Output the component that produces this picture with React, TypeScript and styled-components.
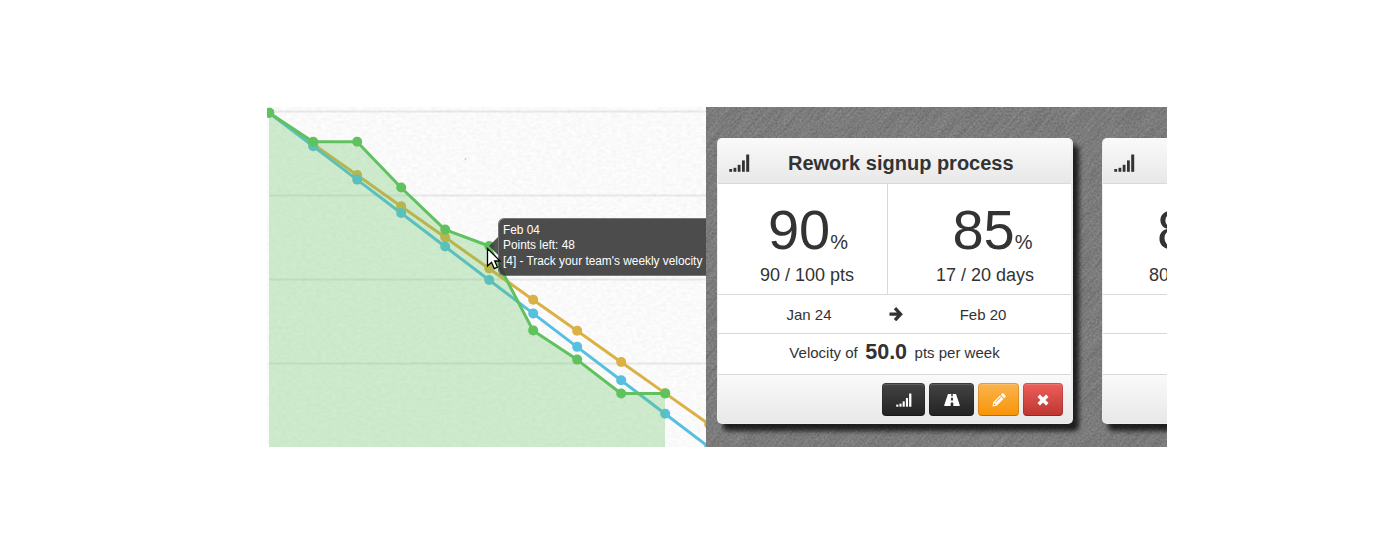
import React from "react";
import styled, { createGlobalStyle } from "styled-components";

const GlobalStyle = createGlobalStyle`
  * { box-sizing: border-box; }
  body {
    margin: 0;
    background: #fff;
    color: #333;
    font-family: "Liberation Sans", Arial, sans-serif;
  }
`;

const Page = styled.main`
  height: 560px;
  padding: 107px 0 0 267px;
`;

const Frame = styled.div`
  display: grid;
  grid-template-columns: 439px 461px;
  width: 900px;
  height: 340px;
  overflow: hidden;
`;

const ChartPane = styled.section`
  position: relative;
  overflow: hidden;
  background: #fafafa;
`;

const BoardPane = styled.section`
  position: relative;
  overflow: hidden;
  background: #777;
`;

const Texture = styled.svg`
  position: absolute;
  inset: 0;
  width: 100%;
  height: 100%;
`;

const Plot = styled.svg`
  position: relative;
  display: block;
`;

const Tooltip = styled.div`
  position: absolute;
  left: 231px;
  top: 110.500px;
  width: 260px;
  height: 58.500px;
  padding: 4px 0 0 4px;
  border: 1.500px solid rgba(85, 85, 85, 0.8);
  border-radius: 6px;
  background: rgba(51, 51, 51, 0.88);
  background-clip: padding-box;
  color: #fff;
  font-size: 11.87px;
  line-height: 15.6px;
  white-space: nowrap;

  &::before {
    content: "";
    position: absolute;
    left: -10px;
    top: 18px;
    border: solid transparent;
    border-width: 9px 9px 9px 0;
    border-right-color: rgba(60, 60, 60, 0.87);
  }
`;

const Pointer = styled.svg`
  position: absolute;
  left: 219px;
  top: 140px;
`;

const CardRow = styled.div`
  position: relative;
  display: flex;
  gap: 29px;
  padding: 31px 0 0 11px;
`;

const CardBox = styled.article`
  flex: none;
  width: 356px;
  height: 286px;
  padding: 0 2px 1px 1px;
  border-radius: 5px;
  background: #ededed;
  box-shadow: 6px 7px 5px rgba(0, 0, 0, 0.76);
`;

const Header = styled.header`
  display: flex;
  align-items: center;
  height: 46px;
  padding: 4px 0 0 11px;
  border-bottom: 1px solid #d9d9d9;
  border-radius: 5px 5px 0 0;
  background: linear-gradient(#fafafa, #e8e8e8);
`;

const Title = styled.h2`
  margin: 0 0 0 38px;
  font-size: 20px;
  line-height: 24px;
`;

const Stats = styled.div<{ $split: number }>`
  display: grid;
  grid-template-columns: ${(p) => p.$split}px 1fr;
  height: 111px;
  border-bottom: 1px solid #d9d9d9;
  background: #fff;
`;

const Stat = styled.div<{ $divided?: boolean }>`
  display: flex;
  flex-direction: column;
  align-items: center;
  padding: 15px 0 0 ${(p) => (p.$divided ? 9 : 11)}px;
  border-right: ${(p) => (p.$divided ? "1px solid #d9d9d9" : "0")};
`;

const Figure = styled.div<{ $nudge?: number }>`
  height: 64px;
  padding-left: ${(p) => p.$nudge ?? 2}px;
  font-size: 56px;
  line-height: 62px;
`;

const Percent = styled.span`
  font-size: 20px;
`;

const Detail = styled.div`
  font-size: 18px;
  line-height: 24px;
`;

const Dates = styled.div`
  display: grid;
  grid-template-columns: 160px 1fr 160px;
  align-items: center;
  justify-items: center;
  height: 39px;
  padding: 0 12px 0 11px;
  border-bottom: 1px solid #d9d9d9;
  background: #fff;
  font-size: 15px;
`;

const Velocity = styled.div`
  display: flex;
  align-items: center;
  justify-content: center;
  gap: 7.500px;
  height: 41px;
  padding-bottom: 3px;
  border-bottom: 1px solid #d9d9d9;
  background: #fff;
  font-size: 15px;
`;

const Speed = styled.strong`
  font-size: 21.500px;
`;

const Footer = styled.footer`
  display: flex;
  justify-content: flex-end;
  gap: 4px;
  height: 48px;
  padding: 8px 8px 0 0;
  border-radius: 0 0 5px 5px;
  background: linear-gradient(#fafafa, #e8e8e8);
`;

const tones = {
  dark: ["#444", "#222"],
  amber: ["#fbb450", "#f89406"],
  red: ["#ee5f5b", "#bd362f"],
};

const Button = styled.button<{ $tone: keyof typeof tones; $width: number }>`
  display: flex;
  align-items: center;
  justify-content: center;
  width: ${(p) => p.$width}px;
  height: 33px;
  padding: 1px 0 0;
  border: 1px solid rgba(0, 0, 0, 0.12);
  border-bottom-color: rgba(0, 0, 0, 0.25);
  border-radius: 4px;
  background: linear-gradient(${(p) => tones[p.$tone].join(", ")}) border-box;
  box-shadow: inset 0 1px 0 rgba(255, 255, 255, 0.15);
  color: #fff;
`;

const SignalIcon = ({ width, height }: { width: number; height: number }) => (
  <svg width={width} height={height} viewBox="0 0 21 18" fill="currentColor">
    <rect x="0.300" y="15" width="2.800" height="2.800" />
    <rect x="4.500" y="13.800" width="2.800" height="4" />
    <rect x="8.700" y="10.800" width="2.800" height="7" />
    <rect x="13" y="6.400" width="2.800" height="11.400" />
    <rect x="17.200" y="0.500" width="3" height="17.300" />
  </svg>
);

const ArrowIcon = () => (
  <svg width="14" height="14" viewBox="0 0 14 14" fill="none" stroke="currentColor" strokeWidth="3.300">
    <path d="M0.500 7.200H11M6 1.200L11.600 7.200L6 13.200" />
  </svg>
);

const RoadIcon = () => (
  <svg width="16" height="12" viewBox="0 0 16 12" fill="currentColor" fillRule="evenodd">
    <path d="M4 0H7.300L7.200 2.200H8.800L8.700 0H12L15.800 11.200Q15.900 12 15.200 12H9.400L9.200 8.400H6.800L6.600 12H0.800Q0.100 12 0.200 11.200ZM7.100 3.800L6.900 6.600H9.100L8.900 3.800Z" />
  </svg>
);

const PencilIcon = () => (
  <svg width="14" height="14" viewBox="0 0 14 14" fill="currentColor" fillRule="evenodd">
    <path d="M0.500 13.500L1.300 9.300L8 2.600L11.400 6L4.700 12.700ZM1.900 11.200L1.700 12.300L2.800 12.100L3.700 11.200L2.800 10.300ZM3.500 8.700L4.100 9.300L9 4.400L8.400 3.800Z" />
    <path d="M8.800 1.800L10 0.600Q10.800 0 11.600 0.600L13.400 2.400Q14 3.200 13.400 4L12.200 5.200Z" />
  </svg>
);

const CrossIcon = () => (
  <svg width="12" height="12" viewBox="0 0 12 12" stroke="currentColor" strokeWidth="3.500">
    <path d="M1.700 1.700L10.300 10.300M10.300 1.700L1.700 10.300" />
  </svg>
);

const STEP = 44;
const actual = [5.7, 34.7, 34.7, 80.5, 122.6, 139, 223.4, 252.6, 286.5, 286.5];
const planned = Array.from({ length: 11 }, (_, i) => 5.7 + i * 31.16);
const ideal = Array.from({ length: 11 }, (_, i) => 5.7 + i * 33.45);
const coords = (ys: number[]) => ys.map((y, i) => `${2 + i * STEP},${y}`).join(" ");

const Series = ({ ys, color }: { ys: number[]; color: string }) => (
  <g fill={color}>
    <polyline points={coords(ys)} fill="none" stroke={color} strokeWidth="3" strokeLinejoin="round" />
    {ys.map((y, i) => (
      <circle key={i} cx={2.2 + i * STEP} cy={y} r="5" />
    ))}
  </g>
);

const Burndown = () => (
  <ChartPane>
    <Texture>
      <filter id="paper" x="0" y="0" width="100%" height="100%" colorInterpolationFilters="sRGB">
        <feTurbulence type="fractalNoise" baseFrequency="0.2 0.35" numOctaves="2" seed="4" />
        <feColorMatrix values="0.06 0 0 0 0.95  0.06 0 0 0 0.95  0.06 0 0 0 0.95  0 0 0 0 1" />
      </filter>
      <rect width="100%" height="100%" filter="url(#paper)" />
    </Texture>
    <Plot width="439" height="340">
      {[4.5, 88.5, 172.5, 256.5].map((y) => (
        <line key={y} x1="2" x2="439" y1={y} y2={y} stroke="#545454" strokeOpacity="0.11" strokeWidth="1.800" />
      ))}
      <Series ys={planned} color="#dbb146" />
      <Series ys={ideal} color="#57bfdf" />
      <polygon points={`2,340 ${coords(actual)} 398,340`} fill="#62c462" fillOpacity="0.3" />
      <Series ys={actual} color="#5fc25f" />
      <circle cx="198.500" cy="52" r="1" fill="#ccc" />
    </Plot>
    <Tooltip>
      <div>Feb 04</div>
      <div>Points left: 48</div>
      <div>[4] - Track your team's weekly velocity</div>
    </Tooltip>
    <Pointer width="16" height="24" viewBox="0 0 16 24">
      <path d="M1.500 1.500V19L5.500 15.300L8.300 21.600L11.500 20.200L8.700 14H14Z" fill="#fff" stroke="#000" strokeWidth="1.300" />
    </Pointer>
  </ChartPane>
);

type CardData = {
  title: string;
  split: number;
  points: [string, string];
  days: [string, string];
  dates: [string, string];
  velocity: string;
};

const cards: CardData[] = [
  {
    title: "Rework signup process",
    split: 170,
    points: ["90", "90 / 100 pts"],
    days: ["85", "17 / 20 days"],
    dates: ["Jan 24", "Feb 20"],
    velocity: "50.0",
  },
  {
    title: "",
    split: 178,
    points: ["80", "80 / 100 pts"],
    days: ["", ""],
    dates: ["", ""],
    velocity: "",
  },
];

const Card = ({ data }: { data: CardData }) => (
  <CardBox>
    <Header>
      <SignalIcon width={21} height={18} />
      <Title>{data.title}</Title>
    </Header>
    <Stats $split={data.split}>
      <Stat $divided>
        <Figure>
          {data.points[0]}
          <Percent>%</Percent>
        </Figure>
        <Detail>{data.points[1]}</Detail>
      </Stat>
      <Stat>
        {data.days[0] && (
          <Figure $nudge={15}>
            {data.days[0]}
            <Percent>%</Percent>
          </Figure>
        )}
        <Detail>{data.days[1]}</Detail>
      </Stat>
    </Stats>
    <Dates>
      <span>{data.dates[0]}</span>
      {data.dates[0] ? <ArrowIcon /> : <span />}
      <span>{data.dates[1]}</span>
    </Dates>
    <Velocity>
      {data.velocity && (
        <>
          <span>Velocity of</span>
          <Speed>{data.velocity}</Speed>
          <span>pts per week</span>
        </>
      )}
    </Velocity>
    <Footer>
      {data.velocity && (
        <>
          <Button $tone="dark" $width={43}>
            <SignalIcon width={16} height={14} />
          </Button>
          <Button $tone="dark" $width={45}>
            <RoadIcon />
          </Button>
          <Button $tone="amber" $width={41}>
            <PencilIcon />
          </Button>
          <Button $tone="red" $width={40}>
            <CrossIcon />
          </Button>
        </>
      )}
    </Footer>
  </CardBox>
);

const Board = () => (
  <BoardPane>
    <Texture>
      <filter id="grain" x="0" y="0" width="100%" height="100%" colorInterpolationFilters="sRGB">
        <feTurbulence type="fractalNoise" baseFrequency="0.5" numOctaves="2" seed="7" />
        <feColorMatrix values="0.26 0 0 0 0.355  0.26 0 0 0 0.355  0.26 0 0 0 0.355  0 0 0 0 1" />
      </filter>
      <filter id="brush" x="0" y="0" width="100%" height="100%" colorInterpolationFilters="sRGB">
        <feTurbulence type="fractalNoise" baseFrequency="0.03 0.4" numOctaves="2" seed="2" />
        <feColorMatrix values="0.36 0 0 0 0.305  0.36 0 0 0 0.305  0.36 0 0 0 0.305  0 0 0 0 1" />
      </filter>
      <rect width="100%" height="100%" filter="url(#grain)" />
      <g transform="rotate(-48 230 170)" opacity="0.3">
        <rect x="-150" y="-200" width="800" height="800" filter="url(#brush)" />
      </g>
    </Texture>
    <CardRow>
      {cards.map((card, i) => (
        <Card key={i} data={card} />
      ))}
    </CardRow>
  </BoardPane>
);

export default function App() {
  return (
    <>
      <GlobalStyle />
      <Page>
        <Frame>
          <Burndown />
          <Board />
        </Frame>
      </Page>
    </>
  );
}
